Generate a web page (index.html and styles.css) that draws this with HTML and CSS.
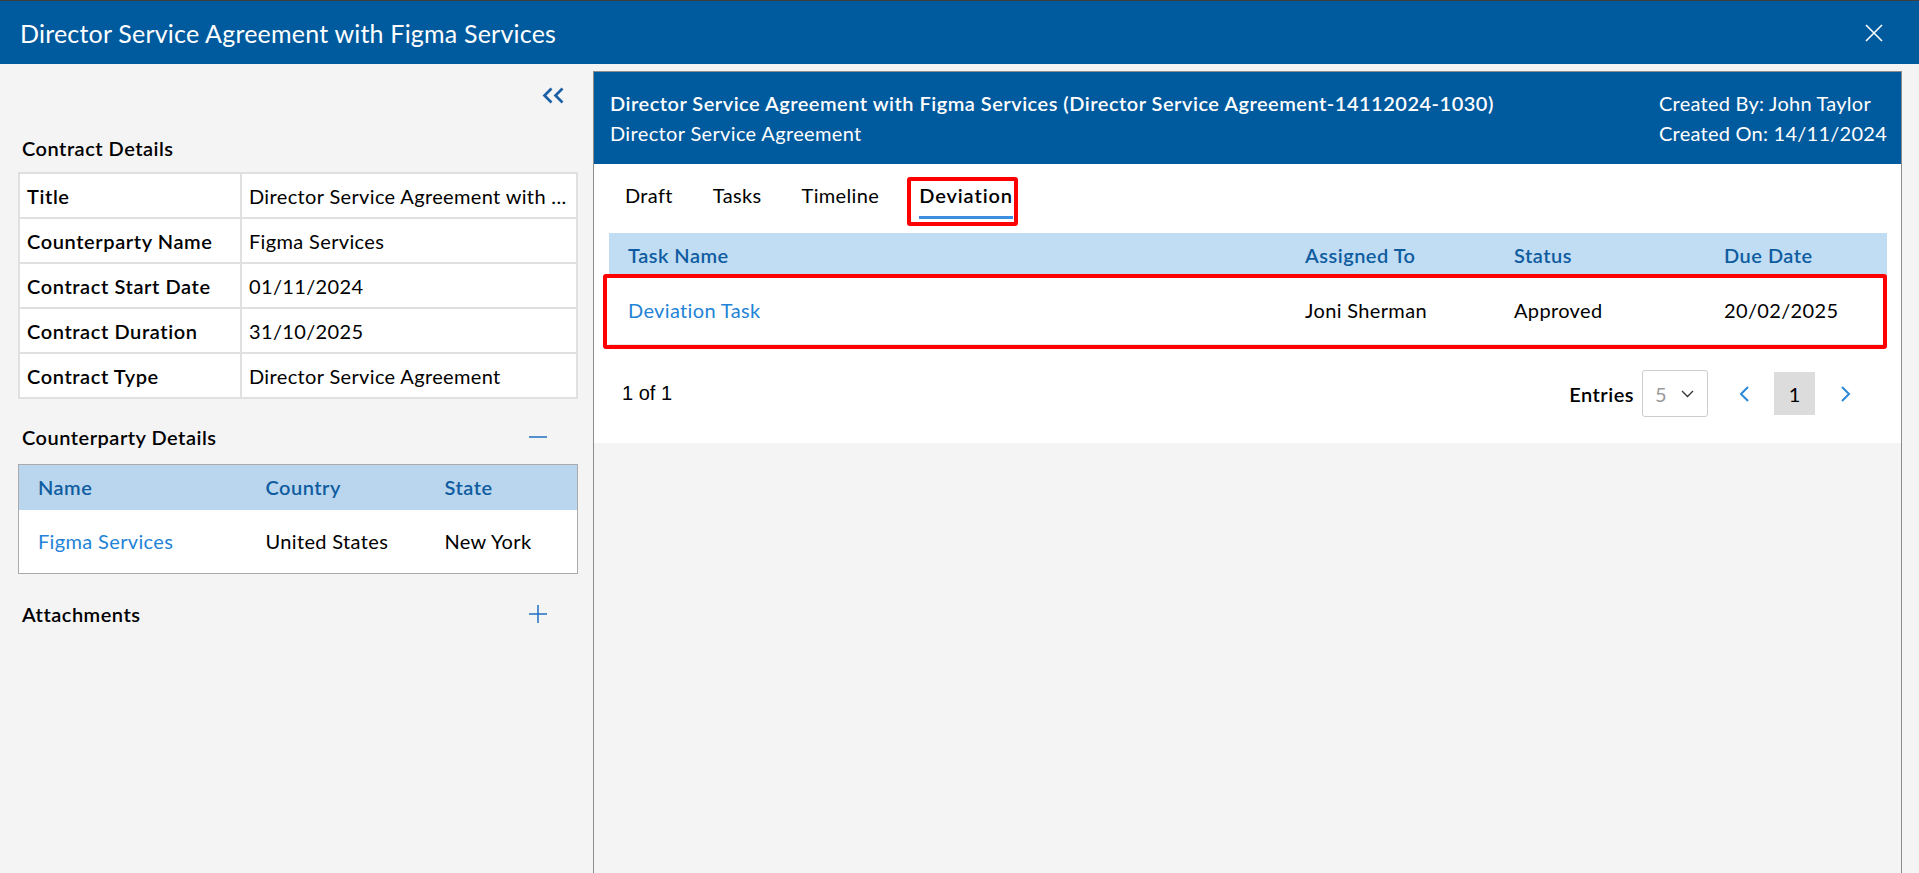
FILE: index.html
```html
<!DOCTYPE html>
<html lang="en">
<head>
<meta charset="utf-8">
<title>Director Service Agreement with Figma Services</title>
<link rel="stylesheet" href="styles.css">
</head>
<body>
<header class="topbar">
  <h1 class="topbar-title">Director Service Agreement with Figma Services</h1>
  <button class="close-btn" aria-label="Close">
    <svg width="18" height="18" viewBox="0 0 18 18"><path d="M1 1L17 17M17 1L1 17" stroke="#fff" stroke-width="1.6" fill="none"/></svg>
  </button>
</header>
<div class="main">
  <aside class="side">
    <div class="collapse-row">
      <svg width="25" height="17" viewBox="0 0 25 17"><path d="M10.5 1.5L3.5 8.5L10.5 15.5M21.5 1.5L14.5 8.5L21.5 15.5" stroke="#1b5fa6" stroke-width="2.7" fill="none"/></svg>
    </div>
    <h2 class="section-title">Contract Details</h2>
    <div class="details">
      <div class="dlabel">Title</div><div class="dvalue">Director Service Agreement with ...</div>
      <div class="dlabel">Counterparty Name</div><div class="dvalue">Figma Services</div>
      <div class="dlabel">Contract Start Date</div><div class="dvalue">01/11/2024</div>
      <div class="dlabel">Contract Duration</div><div class="dvalue">31/10/2025</div>
      <div class="dlabel">Contract Type</div><div class="dvalue">Director Service Agreement</div>
    </div>
    <div class="section-head cp-head">
      <h2 class="section-title">Counterparty Details</h2>
      <svg width="20" height="20" viewBox="0 0 20 20"><path d="M1 10H19" stroke="#1f6fc0" stroke-width="1.5"/></svg>
    </div>
    <table class="cp-table">
      <thead><tr><th class="c1">Name</th><th class="c2">Country</th><th>State</th></tr></thead>
      <tbody><tr><td><a class="link" href="#">Figma Services</a></td><td>United States</td><td>New York</td></tr></tbody>
    </table>
    <div class="section-head att-head">
      <h2 class="section-title">Attachments</h2>
      <svg width="20" height="20" viewBox="0 0 20 20"><path d="M1 10H19M10 1V19" stroke="#1f6fc0" stroke-width="1.5"/></svg>
    </div>
  </aside>
  <section class="panel">
    <div class="panel-head">
      <div>
        <div class="ph-title">Director Service Agreement with Figma Services (Director Service Agreement-14112024-1030)</div>
        <div>Director Service Agreement</div>
      </div>
      <div class="ph-meta">
        <div>Created By: John Taylor</div>
        <div>Created On: 14/11/2024</div>
      </div>
    </div>
    <div class="panel-body">
      <nav class="tabs">
        <span class="tab">Draft</span>
        <span class="tab">Tasks</span>
        <span class="tab">Timeline</span>
        <span class="tab active">Deviation<span class="mark mark-tab"></span></span>
      </nav>
      <div class="task-wrap">
        <table class="task-table">
          <colgroup><col class="t1"><col class="t2"><col class="t3"><col></colgroup>
          <thead><tr><th>Task Name</th><th>Assigned To</th><th>Status</th><th>Due Date</th></tr></thead>
          <tbody><tr><td><a class="link" href="#">Deviation Task</a></td><td>Joni Sherman</td><td>Approved</td><td>20/02/2025</td></tr></tbody>
        </table>
        <div class="mark mark-row"></div>
      </div>
      <div class="pager">
        <span class="count">1 of 1</span>
        <span class="entries-label">Entries</span>
        <div class="select"><span class="sel-val">5</span>
          <svg width="13" height="8" viewBox="0 0 13 8"><path d="M1 1L6.5 6.5L12 1" stroke="#333" stroke-width="1.3" fill="none"/></svg>
        </div>
        <button class="pbtn" aria-label="Previous"><svg width="12" height="16" viewBox="0 0 12 16"><path d="M10 1L3 8L10 15" stroke="#2b88d8" stroke-width="2" fill="none"/></svg></button>
        <button class="pbtn page">1</button>
        <button class="pbtn" aria-label="Next"><svg width="12" height="16" viewBox="0 0 12 16"><path d="M2 1L9 8L2 15" stroke="#2b88d8" stroke-width="2" fill="none"/></svg></button>
      </div>
    </div>
  </section>
</div>
</body>
</html>
```
FILE: styles.css
```css
* { box-sizing: border-box; }
html, body { margin: 0; height: 100%; }
body {
  font-family: "Segoe UI", Lato, "Open Sans", sans-serif;
  font-size: 20px;
  letter-spacing: 0.35px;
  color: #000;
  background: #f4f4f4;
  overflow: hidden;
}
.topbar {
  height: 64px;
  background: #005a9e;
  border-top: 1px solid #3d3d3d;
  display: flex;
  align-items: center;
  justify-content: space-between;
  padding: 0 36px 0 20px;
  color: #fff;
}
.topbar-title { margin: 0; font-size: 25px; font-weight: 400; letter-spacing: 0.2px; }
.close-btn { background: none; border: 0; padding: 0; display: flex; cursor: pointer; }

.main { display: flex; height: calc(100vh - 64px); }

.side { width: 593px; flex: none; padding: 0 15px 0 18px; }
.collapse-row { height: 60px; padding: 23px 12px 0 0; display: flex; justify-content: flex-end; align-items: flex-start; }
.section-title { margin: 10px 0 10px 4px; font-size: 20px; font-weight: 600; line-height: 28px; letter-spacing: 0.5px; }
.details {
  display: grid;
  grid-template-columns: 220px 1fr;
  gap: 2px;
  background: #e0e0e0;
  border: 2px solid #e0e0e0;
}
.dlabel, .dvalue { background: #fff; height: 43px; display: flex; align-items: center; padding-left: 7px; white-space: nowrap; overflow: hidden; }
.dlabel { font-weight: 600; letter-spacing: 0.6px; }

.section-head { display: flex; justify-content: space-between; align-items: center; padding-right: 30px; }
.section-head .section-title { margin: 0 0 0 4px; }
.cp-head { margin-top: 24px; margin-bottom: 13px; }
.att-head { margin-top: 26px; }

.cp-table { width: 100%; border-collapse: collapse; border: 1px solid #aaa; background: #fff; table-layout: fixed; }
.cp-table th { background: #b9d6ee; color: #0f5ca0; font-weight: 600; text-align: left; height: 45px; padding: 0 0 0 19px; letter-spacing: 0.5px; }
.cp-table td { height: 64px; padding: 0 0 0 19px; }
.cp-table .c1 { width: 228px; }
.cp-table .c2 { width: 179px; }
.link { color: #2383d6; text-decoration: none; }

.panel {
  flex: 1;
  margin: 7px 17px 0 0;
  border: 1px solid #8c8c8c;
  border-bottom: 0;
  background: #f4f4f4;
  display: flex;
  flex-direction: column;
}
.panel-head {
  background: #005a9e;
  color: #fff;
  padding: 16px 14px 16px 16px;
  display: flex;
  justify-content: space-between;
  line-height: 30px;
}
.ph-title { font-weight: 600; letter-spacing: 0.5px; }
.ph-meta { letter-spacing: 0.25px; }
.panel-body { background: #fff; padding: 17px 14px 0 15px; }
.tabs { display: flex; gap: 40px; padding-left: 16px; }
.tab { position: relative; line-height: 28px; padding-bottom: 7px; border-bottom: 3px solid transparent; }
.tab.active { font-weight: 600; letter-spacing: 0.9px; border-bottom-color: #3b8ee0; }
.mark { position: absolute; border: 4px solid #ff0000; border-radius: 3px; pointer-events: none; }
.mark-tab { left: -12px; right: -5px; top: -4px; bottom: -10px; }

.task-wrap { position: relative; margin-top: 14px; }
.task-table { width: 100%; border-collapse: collapse; table-layout: fixed; }
.task-table th { background: #c0ddf3; color: #0f5ca0; font-weight: 600; text-align: left; height: 44px; padding: 0 0 0 19px; letter-spacing: 0.5px; }
.task-table td { height: 67px; border-bottom: 1px solid #e6e6e6; padding: 0 0 0 19px; }
.task-table .t1 { width: 677px; }
.task-table .t2 { width: 209px; }
.task-table .t3 { width: 210px; }
.mark-row { left: -6px; right: 0; top: 41px; height: 75px; }

.pager { height: 98px; display: flex; align-items: center; padding: 0 21px 0 13px; }
.count { font-family: "Liberation Sans", Arial, sans-serif; font-size: 20px; letter-spacing: 0; }
.entries-label { margin-left: auto; font-weight: 600; margin-right: 8px; letter-spacing: 0.5px; }
.select {
  width: 66px; height: 47px;
  border: 1px solid #cccccc; border-radius: 3px;
  display: flex; align-items: center; justify-content: space-between;
  padding: 0 13px 0 12px;
  margin-right: 15px;
}
.sel-val { color: #9a9a9a; }
.pbtn {
  width: 41px; height: 43px;
  border: 0; background: none; padding: 0;
  display: flex; align-items: center; justify-content: center;
  font: inherit; color: #000;
}
.pbtn + .pbtn { margin-left: 10px; }
.pbtn.page { background: #dcdcdc; }
```
